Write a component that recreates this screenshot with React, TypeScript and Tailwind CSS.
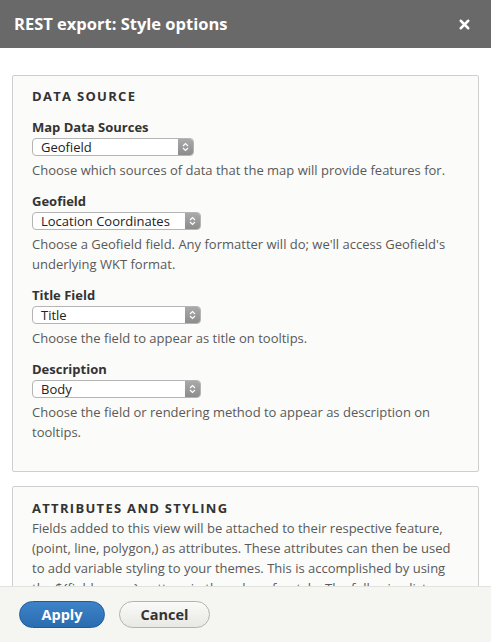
import { X } from 'lucide-react';

const FONT = { fontFamily: '"Open Sans", "Liberation Sans", sans-serif' };

interface FieldProps {
  label: string;
  value: string;
  width: string;
  help: string;
}

function SelectBox({ value, width }: { value: string; width: string }) {
  return (
    <div className={`mt-[1px] flex h-[18px] ${width} items-stretch overflow-hidden rounded-[4px] border border-[#b5b5b5] bg-white`}>
      <span className="flex-1 truncate pl-[8px] text-[13px] leading-[16px] text-[#222]">{value}</span>
      <span className="flex w-[15px] items-center justify-center bg-gradient-to-b from-[#a9a9a9] to-[#8c8c8c]">
        <svg width="7" height="10" viewBox="0 0 7 10" fill="none" stroke="#fff" strokeWidth="1.2">
          <path d="M1 4 L3.5 1.5 L6 4" />
          <path d="M1 6 L3.5 8.5 L6 6" />
        </svg>
      </span>
    </div>
  );
}

function Field({ label, value, width, help }: FieldProps) {
  return (
    <div className="mt-[11px]">
      <div className="text-[13px] font-bold leading-[20px] text-[#333]">{label}</div>
      <SelectBox value={value} width={width} />
      <p className="mt-[4px] pr-[8px] text-[13px] leading-[20px] text-[#595959]">{help}</p>
    </div>
  );
}

export default function App() {
  return (
    <div className="flex h-[642px] w-[491px] flex-col overflow-hidden bg-white" style={FONT}>
      <div className="flex h-[48px] shrink-0 items-center justify-between bg-[#696969] pl-[14px] pr-[19px]">
        <h1 className="text-[16.5px] font-bold text-white">REST export: Style options</h1>
        <X className="h-[15px] w-[15px] text-white" strokeWidth={4} />
      </div>

      <div className="min-h-0 flex-1 overflow-hidden px-[12px] pt-[27px]">
        <fieldset className="h-[397px] rounded-[2px] border border-[#cfcfcf] bg-[#fbfbfa] pl-[19px] pr-[12px] pt-[10px]">
          <h2 className="text-[13px] font-bold uppercase leading-[20px] tracking-[1.3px] text-[#333]">Data Source</h2>
          <Field
            label="Map Data Sources"
            value="Geofield"
            width="w-[162px]"
            help="Choose which sources of data that the map will provide features for."
          />
          <Field
            label="Geofield"
            value="Location Coordinates"
            width="w-[169px]"
            help="Choose a Geofield field. Any formatter will do; we'll access Geofield's underlying WKT format."
          />
          <Field
            label="Title Field"
            value="Title"
            width="w-[169px]"
            help="Choose the field to appear as title on tooltips."
          />
          <Field
            label="Description"
            value="Body"
            width="w-[169px]"
            help="Choose the field or rendering method to appear as description on tooltips."
          />
        </fieldset>

        <fieldset className="mt-[14px] rounded-[2px] border border-[#cfcfcf] bg-[#fbfbfa] pb-[20px] pl-[19px] pr-[20px] pt-[11px]">
          <h2 className="text-[13px] font-bold uppercase leading-[20px] tracking-[1.3px] text-[#333]">Attributes and Styling</h2>
          <p className="text-[13px] leading-[20px] text-[#595959]">
            Fields added to this view will be attached to their respective feature, (point, line, polygon,) as attributes.
            These attributes can then be used to add variable styling to your themes. This is accomplished by using the
            ${'{'}field_name{'}'} pattern in the value of a style. The following list shows the available fields.
          </p>
        </fieldset>
      </div>

      <div className="flex h-[56px] shrink-0 items-center gap-[14px] border-t border-[#e2e2de] bg-[#f5f5f2] pl-[19px]">
        <button className="h-[27px] w-[86px] rounded-full border border-[#1e5c9e] bg-gradient-to-b from-[#3d83c8] to-[#2a6cb0] text-[14.5px] font-bold text-white">
          Apply
        </button>
        <button className="h-[27px] w-[91px] rounded-full border border-[#b3b3ac] bg-gradient-to-b from-[#fafaf8] to-[#e8e8e4] text-[14.5px] font-bold text-[#333]">
          Cancel
        </button>
      </div>
    </div>
  );
}
